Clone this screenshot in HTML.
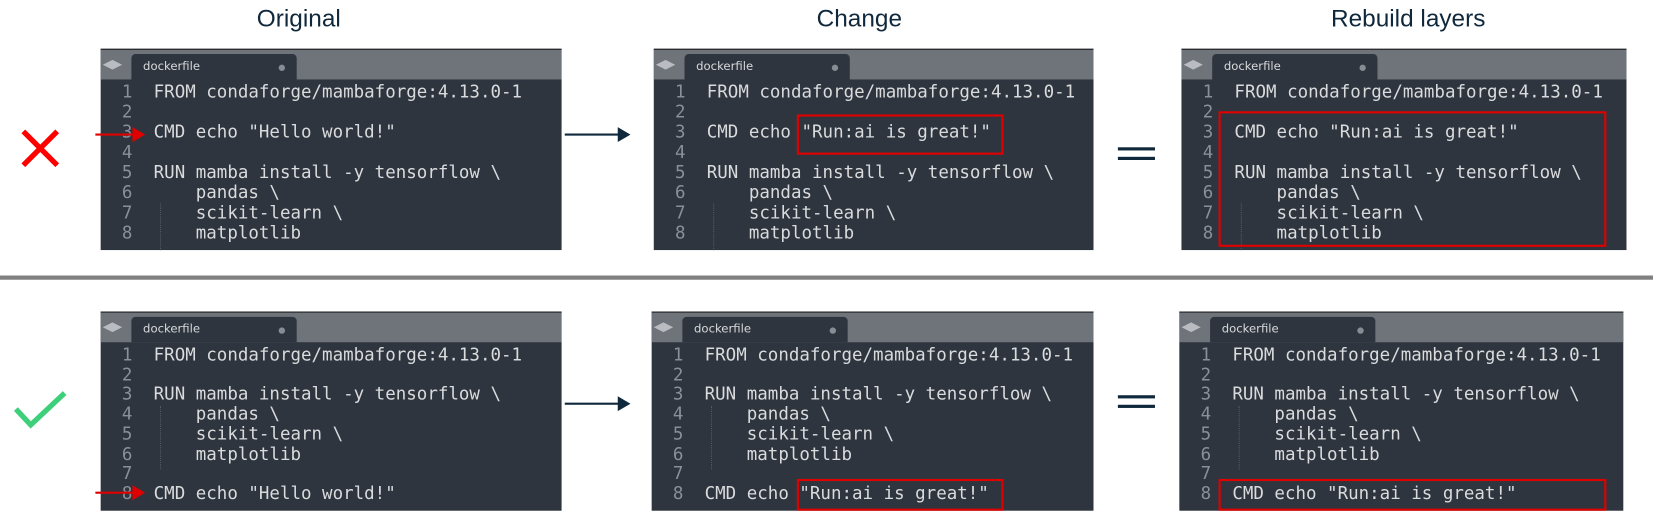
<!DOCTYPE html>
<html><head><meta charset="utf-8"><style>
html,body{margin:0;padding:0;background:#fff;width:1653px;height:516px;overflow:hidden}
#w{position:absolute;left:0;top:0;width:1560px;height:487px;transform:scale(1.0596,1.0596);transform-origin:0 0}
.t{position:absolute;font-family:"Liberation Sans",sans-serif;font-size:23px;color:#10283c;transform:translateX(-50%);top:4px;white-space:nowrap}
.p{position:absolute;background:#2f353e;border-top:1px solid #222;overflow:hidden}
.bar{position:absolute;left:0;right:0;top:0;background:#6f747b}
.tab{position:absolute;left:29px;width:156px;background:#2f353e;border-radius:4px 4px 0 0;bottom:0}
.tab span{position:absolute;left:11px;top:5px;font-family:"DejaVu Sans",sans-serif;font-size:11px;color:#d8dadc}
.tab i{position:absolute;left:139px;top:10px;width:6px;height:6px;border-radius:50%;background:#888d94}
.nav{position:absolute;left:2px;font-size:12px;color:#b9bcc0;font-family:"DejaVu Sans",sans-serif;letter-spacing:-2px}
.code{position:absolute;left:0;font-family:"DejaVu Sans Mono","Liberation Mono",monospace;font-size:16.5px;color:#d9dbdd;white-space:pre}
.code b{font-weight:normal;color:#8a9097;display:inline-block;width:30px;text-align:right;margin-right:20px}
.g{position:absolute;border-left:1px dotted #555b63}
.rb{position:absolute;border:2px solid #e00000;box-sizing:border-box}
.ar{position:absolute;height:2px;background:#10283c}
.ar:after{content:"";position:absolute;right:-2px;top:-6px;border-left:12px solid #10283c;border-top:7px solid transparent;border-bottom:7px solid transparent}
.ra{position:absolute;height:2px;background:#e00000}
.ra:after{content:"";position:absolute;right:-2px;top:-6px;border-left:12px solid #e00000;border-top:7px solid transparent;border-bottom:7px solid transparent}
.eq{position:absolute;width:35px;height:3px;background:#10283c}
</style></head><body><div id="w">
<div class="t" style="left:282px">Original</div>
<div class="t" style="left:811px">Change</div>
<div class="t" style="left:1329px">Rebuild layers</div>
<div style="position:absolute;left:0;top:260px;width:1560px;height:4px;background:#808080"></div>

<svg style="position:absolute;left:18px;top:120px" width="40" height="40"><path d="M4 4L36 36M36 4L4 36" stroke="#f00" stroke-width="5"/></svg>
<svg style="position:absolute;left:12px;top:368px" width="52" height="38"><path d="M3 18L17 33L49 3" stroke="#3ecf7a" stroke-width="5" fill="none"/></svg>
<div class="ar" style="left:533px;top:126px;width:60px"></div>
<div class="ar" style="left:533px;top:380px;width:60px"></div>
<div class="eq" style="left:1055px;top:139px"></div><div class="eq" style="left:1055px;top:148px"></div>
<div class="eq" style="left:1055px;top:373px"></div><div class="eq" style="left:1055px;top:382px"></div>

<div class="p" style="left:95px;top:46px;width:435px;height:189px"><div class="bar" style="height:28px"><div class="nav" style="top:6px">◀ ▶</div><div class="tab" style="height:24px"><span>dockerfile</span><i></i></div></div>
<div class="g" style="left:56px;top:145px;height:45px"></div>
<div class="code" style="top:30px;line-height:19px"><b>1</b>FROM condaforge/mambaforge:4.13.0-1
<b>2</b>
<b>3</b>CMD echo "Hello world!"
<b>4</b>
<b>5</b>RUN mamba install -y tensorflow \
<b>6</b>    pandas \
<b>7</b>    scikit-learn \
<b>8</b>    matplotlib</div></div>

<div class="p" style="left:617px;top:46px;width:415px;height:189px"><div class="bar" style="height:28px"><div class="nav" style="top:6px">◀ ▶</div><div class="tab" style="height:24px"><span>dockerfile</span><i></i></div></div>
<div class="g" style="left:56px;top:145px;height:45px"></div>
<div class="code" style="top:30px;line-height:19px"><b>1</b>FROM condaforge/mambaforge:4.13.0-1
<b>2</b>
<b>3</b>CMD echo "Run:ai is great!"
<b>4</b>
<b>5</b>RUN mamba install -y tensorflow \
<b>6</b>    pandas \
<b>7</b>    scikit-learn \
<b>8</b>    matplotlib</div></div>

<div class="p" style="left:1115px;top:46px;width:420px;height:189px"><div class="bar" style="height:28px"><div class="nav" style="top:6px">◀ ▶</div><div class="tab" style="height:24px"><span>dockerfile</span><i></i></div></div>
<div class="g" style="left:56px;top:145px;height:45px"></div>
<div class="code" style="top:30px;line-height:19px"><b>1</b>FROM condaforge/mambaforge:4.13.0-1
<b>2</b>
<b>3</b>CMD echo "Run:ai is great!"
<b>4</b>
<b>5</b>RUN mamba install -y tensorflow \
<b>6</b>    pandas \
<b>7</b>    scikit-learn \
<b>8</b>    matplotlib</div></div>

<div class="p" style="left:95px;top:294px;width:435px;height:187px"><div class="bar" style="height:28px"><div class="nav" style="top:6px">◀ ▶</div><div class="tab" style="height:24px"><span>dockerfile</span><i></i></div></div>
<div class="g" style="left:56px;top:88px;height:60px"></div>
<div class="code" style="top:31px;line-height:18.7px"><b>1</b>FROM condaforge/mambaforge:4.13.0-1
<b>2</b>
<b>3</b>RUN mamba install -y tensorflow \
<b>4</b>    pandas \
<b>5</b>    scikit-learn \
<b>6</b>    matplotlib
<b>7</b>
<b>8</b>CMD echo "Hello world!"</div></div>

<div class="p" style="left:615px;top:294px;width:417px;height:187px"><div class="bar" style="height:28px"><div class="nav" style="top:6px">◀ ▶</div><div class="tab" style="height:24px"><span>dockerfile</span><i></i></div></div>
<div class="g" style="left:56px;top:88px;height:60px"></div>
<div class="code" style="top:31px;line-height:18.7px"><b>1</b>FROM condaforge/mambaforge:4.13.0-1
<b>2</b>
<b>3</b>RUN mamba install -y tensorflow \
<b>4</b>    pandas \
<b>5</b>    scikit-learn \
<b>6</b>    matplotlib
<b>7</b>
<b>8</b>CMD echo "Run:ai is great!"</div></div>

<div class="p" style="left:1113px;top:294px;width:419px;height:187px"><div class="bar" style="height:28px"><div class="nav" style="top:6px">◀ ▶</div><div class="tab" style="height:24px"><span>dockerfile</span><i></i></div></div>
<div class="g" style="left:56px;top:88px;height:60px"></div>
<div class="code" style="top:31px;line-height:18.7px"><b>1</b>FROM condaforge/mambaforge:4.13.0-1
<b>2</b>
<b>3</b>RUN mamba install -y tensorflow \
<b>4</b>    pandas \
<b>5</b>    scikit-learn \
<b>6</b>    matplotlib
<b>7</b>
<b>8</b>CMD echo "Run:ai is great!"</div></div>

<div class="rb" style="left:752px;top:108px;width:195px;height:38px"></div>
<div class="rb" style="left:1150px;top:105px;width:366px;height:128px"></div>
<div class="rb" style="left:752px;top:452px;width:195px;height:30px"></div>
<div class="rb" style="left:1150px;top:452px;width:366px;height:30px"></div>
<div class="ra" style="left:90px;top:126px;width:45px"></div>
<div class="ra" style="left:90px;top:464px;width:45px"></div>
</div></body></html>
